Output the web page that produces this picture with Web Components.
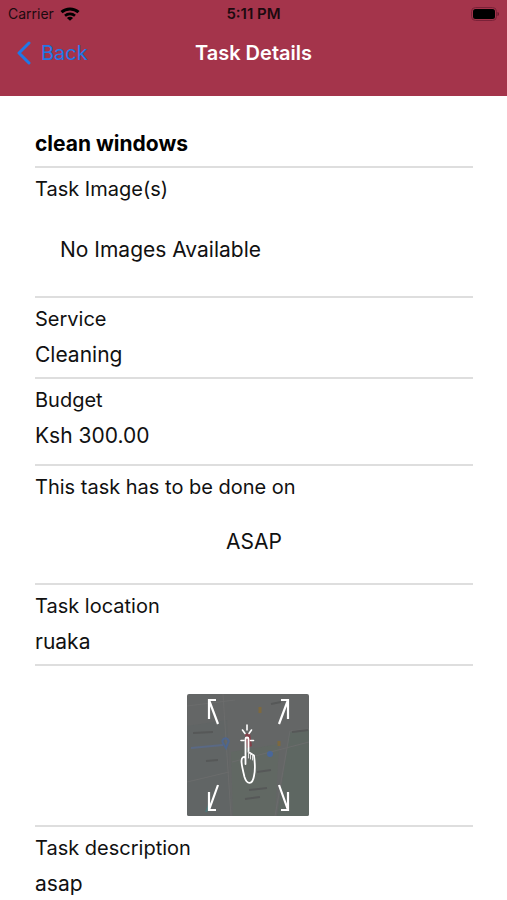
<!DOCTYPE html>
<html lang="en">
<head>
<meta charset="utf-8">
<meta name="viewport" content="width=device-width, initial-scale=1">
<title>Task Details</title>
<style>
  body { margin: 0; background: #fff; color: #111; font-family: Inter, "Liberation Sans", sans-serif; }
</style>
</head>
<body>
<task-screen></task-screen>

<script>
  const define = (name, markup) => customElements.define(name, class extends HTMLElement {
    constructor() {
      super();
      this.attachShadow({ mode: 'open' }).innerHTML = markup;
    }
  });

  define('status-bar', `
    <style>
      :host { display: grid; grid-template-columns: 1fr auto 1fr; align-items: center; height: 28px; padding: 0 8px; color: #1c0a0f; font-size: 14px; line-height: 28px; }
      .carrier { display: flex; align-items: center; gap: 6px; }
      .time { font-size: 15px; font-weight: 600; }
      .battery { justify-self: end; }
      svg { display: block; }
    </style>
    <div class="carrier"><span>Carrier</span>
      <svg width="20" height="14" viewBox="0 0 20 14" fill="none" stroke="#000" stroke-width="3" aria-hidden="true">
        <path d="M1.5 5.2C6.2.8 13.8.8 18.500 5.200"/>
        <path d="M5 8.700C7.800 6.200 12.200 6.200 15 8.700" stroke-width="2.600"/>
        <path d="M10 13.800 6.900 10.900C8.700 9.300 11.300 9.300 13.100 10.900Z" fill="#000" stroke="none"/>
      </svg>
    </div>
    <span class="time">5:11 PM</span>
    <svg class="battery" width="28" height="14" viewBox="0 0 28 14" aria-hidden="true">
      <rect x=".5" y=".5" width="25" height="13" rx="4" fill="none" stroke="#7a2138"/>
      <rect x="2" y="2" width="22" height="10" rx="2.500" fill="#000"/>
      <path d="M26.500 5v4c2-.6 2-3.400 0-4z" fill="#6a1a2f"/>
    </svg>`);

  define('nav-bar', `
    <style>
      :host { display: grid; grid-template-columns: 1fr auto 1fr; align-items: center; height: 50px; padding: 0 16px 18px; color: #fff; }
      h1 { margin: 0; font-size: 20px; line-height: 28px; font-weight: 600; }
      button { justify-self: start; display: flex; align-items: center; gap: 10px; padding: 0; border: 0; background: none; color: #1f78e8; font: inherit; font-size: 20px; line-height: 28px; cursor: pointer; }
      svg { display: block; }
    </style>
    <button type="button">
      <svg width="15" height="24" viewBox="0 0 15 24" fill="none" stroke="currentColor" stroke-width="3" stroke-linecap="round" stroke-linejoin="round" aria-hidden="true"><path d="M13 2 3 12 13 22"/></svg>
      <span>Back</span>
    </button>
    <h1><slot></slot></h1>`);

  define('task-section', `
    <style>
      :host { display: block; border-top: 2px solid #dedede; padding: 4px 0 5px; font-size: 21px; line-height: 35px; }
      :host([roomy]) { padding-bottom: 11px; }
      h2 { margin: 0; font: inherit; font-size: 20px; }
    </style>
    <h2><slot name="label"></slot></h2>
    <slot></slot>`);

  define('map-preview', `
    <style>
      :host { display: flex; justify-content: center; border-top: 2px solid #dedede; padding: 28px 12px 9px 0; }
      button { display: block; width: 122px; padding: 0; border: 0; background: none; cursor: pointer; }
      svg { display: block; width: 100%; border-radius: 2px; }
    </style>
    <button type="button" aria-label="Open map">
      <svg viewBox="0 0 122 122" aria-hidden="true">
        <rect width="122" height="122" fill="#646666"/>
        <path d="M0 32 40 26 44 122H0z" fill="#616565"/>
        <path d="M44 58 92 50 88 122H46z" fill="#616863"/>
        <path d="M103 38 122 35V122H90z" fill="#5e6762"/>
        <path d="M0 12 48 6M36 0 44 122M45 68 122 48M103 37 88 122M104 37 122 35M0 88 42 78" fill="none" stroke="#6b6c6c"/>
        <path d="M4 54 36 51" stroke="#5a6984" stroke-width="2"/>
        <path d="M39 54 36 49a3 3 0 1 1 5 0z" stroke="#4e668f" stroke-width="2" fill="none"/>
        <path d="M6 39 26 38M19 67 31 66M70 78 84 76M62 96 80 94M58 105 73 103M105 38 121 36M84 10 94 8" stroke="#565858" stroke-width="2"/>
        <circle cx="83" cy="60" r="3" fill="#49679a"/>
        <path d="M73 13v6M92 47v5" stroke="#7d693f" stroke-width="3"/>
        <path d="M19 118 23 108" stroke="#4b7779" stroke-width="2"/>
        <path d="M22 25V6H29M22 6 31 30M94 6H101V25M101 6 92 30M22 98V116H29M22 116 31 91M94 116H101V98M101 116 92 91" fill="none" stroke="#fff" stroke-width="2.200"/>
        <path d="M58 40 63 39 65 52 60 54z" fill="#84404a"/>
        <g fill="none" stroke="#fff" stroke-width="1.600" stroke-linecap="round" stroke-linejoin="round">
          <path d="M60 31v5M55.500 36l2.500 3.500M64.500 36l-2.500 3.500M54 46.500h3M63.500 46.500h3"/>
          <path d="M58.500 70V45a1.500 1.500 0 0 1 3 0V58L67 61.500C68 69 68.500 76 67 82C65.500 91 60 91 57.500 83C56 77 54.500 71 54.500 67C54.500 63 57 62 58.500 64" stroke-width="1.800"/>
          <path d="M61.500 64V58M63.500 65V60M65.500 66V61" stroke-width="1" stroke="#ddd"/>
        </g>
      </svg>
    </button>`);

  define('task-screen', `
    <style>
      :host { display: block; }
      header { background: #a4344b; }
      main { padding: 24px 34px 0 35px; }
      .title { margin: 0; padding: 6px 0 5px; font-size: 21px; line-height: 35px; font-weight: 700; color: #000; }
      p { margin: 0; }
      .empty { padding: 25px 25px 24px; }
      .when { padding: 19px 0; text-align: center; }
    </style>
    <header>
      <status-bar></status-bar>
      <nav-bar>Task Details</nav-bar>
    </header>
    <main>
      <h2 class="title">clean windows</h2>
      <task-section><span slot="label">Task Image(s)</span><p class="empty">No Images Available</p></task-section>
      <task-section><span slot="label">Service</span><p>Cleaning</p></task-section>
      <task-section roomy><span slot="label">Budget</span><p>Ksh 300.00</p></task-section>
      <task-section><span slot="label">This task has to be done on</span><p class="when">ASAP</p></task-section>
      <task-section><span slot="label">Task location</span><p>ruaka</p></task-section>
      <map-preview></map-preview>
      <task-section><span slot="label">Task description</span><p>asap</p></task-section>
    </main>`);
</script>
</body>
</html>
